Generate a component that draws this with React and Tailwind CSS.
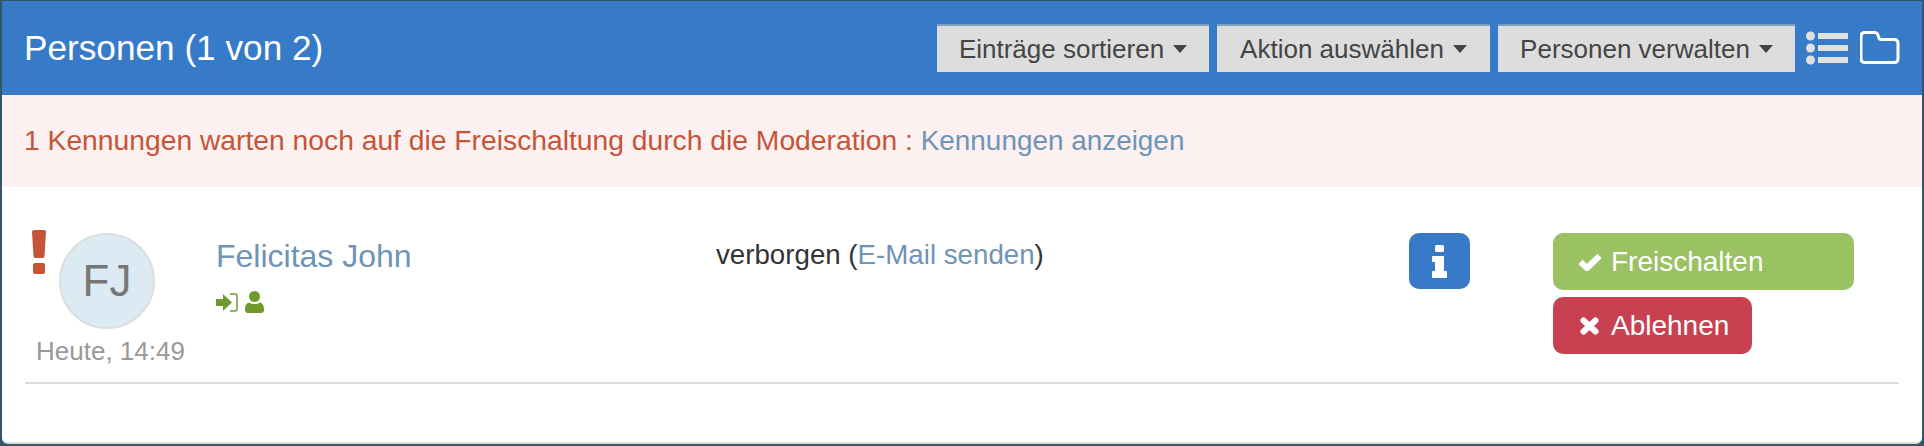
const menus = [
  ['Einträge sortieren', 'w-[272px]'],
  ['Aktion auswählen', 'w-[273px]'],
  ['Personen verwalten', 'w-[297px]'],
];

function Caret() {
  return (
    <svg width="14" height="8" viewBox="0 0 14 8" fill="#444444">
      <path d="M0 0h14L7 8z" />
    </svg>
  );
}

function ListIcon() {
  return (
    <svg width="42" height="34" viewBox="0 0 42 34" fill="#e0e0e0">
      <circle cx="4.500" cy="5" r="4.500" />
      <circle cx="4.500" cy="17" r="4.500" />
      <circle cx="4.500" cy="29" r="4.500" />
      <rect x="12" y="2" width="30" height="6" />
      <rect x="12" y="14" width="30" height="6" />
      <rect x="12" y="26" width="30" height="6" />
    </svg>
  );
}

function FolderIcon() {
  return (
    <svg width="40" height="34" viewBox="0 0 40 34" fill="none" stroke="#fff" strokeWidth="3">
      <path d="M5.500 1.500h9c2 0 3 1 3.500 2.500l1 3c.3 1 1 1.500 2 1.500h13c2.500 0 4 1.500 4 4v15c0 2.500-1.500 4-4 4h-29c-2.500 0-4-1.500-4-4v-22c0-2.500 1.500-4 3.500-4z" strokeLinejoin="round" />
    </svg>
  );
}

function AlertMark() {
  return (
    <svg width="14" height="44" viewBox="0 0 14 44" fill="#c65538">
      <path d="M2 0h10c1.500 0 2 1 2 2l-1.500 24c0 1-.7 2-2 2h-7c-1.300 0-2-1-2-2L0 2c0-1 .5-2 2-2z" />
      <rect x="1" y="33" width="12" height="11" rx="2" />
    </svg>
  );
}

function InfoGlyph() {
  return (
    <svg width="15" height="33" viewBox="0 0 15 33" fill="#fff">
      <rect x="3" y="0" width="9" height="7" rx="1.500" />
      <path d="M1 11h10c.6 0 1 .4 1 1v14h2c.6 0 1 .4 1 1v5c0 .6-.4 1-1 1H1c-.6 0-1-.4-1-1v-5c0-.6.4-1 1-1h2v-9H1c-.6 0-1-.4-1-1v-4c0-.6.4-1 1-1z" />
    </svg>
  );
}

function CheckGlyph() {
  return (
    <svg width="24" height="18" viewBox="0 0 24 18" fill="none" stroke="#fff" strokeWidth="6" strokeLinejoin="round">
      <path d="M2.500 9l6.500 6L21.500 3" />
    </svg>
  );
}

function CrossGlyph() {
  return (
    <svg width="19" height="18" viewBox="0 0 19 18" fill="none" stroke="#fff" strokeWidth="6" strokeLinecap="round">
      <path d="M3.500 3.500l12 11M15.500 3.500l-12 11" />
    </svg>
  );
}

function LoginGlyph() {
  return (
    <svg width="22" height="19" viewBox="0 0 22 19" fill="#6f9a2e">
      <path d="M0 6h7V1l9 8.500-9 8.500v-5H0z" />
      <path d="M14 1h5c1.200 0 2 .8 2 2v13c0 1.200-.8 2-2 2h-5" fill="none" stroke="#6f9a2e" strokeWidth="1.500" />
    </svg>
  );
}

function UserGlyph() {
  return (
    <svg width="19" height="22" viewBox="0 0 19 22" fill="#6f9a2e">
      <circle cx="9.500" cy="5.500" r="5.500" />
      <path d="M4 11.500c1.500 1 3.500 1.500 5.500 1.500s4-.5 5.500-1.500c2.500.5 4 3 4 6.500v1c0 2-1 3-3 3H3c-2 0-3-1-3-3v-1c0-3.500 1.500-6 4-6.500z" />
    </svg>
  );
}

export default function App() {
  return (
    <div className="h-[446px] w-[1924px] overflow-hidden bg-[#34566b] pt-px pr-[2px] pb-[2px] pl-[2px] font-['Liberation_Sans',Arial,sans-serif]">
      <div className="h-full rounded-b-md border-b-2 border-[#dddddd] bg-white">
        <header className="flex h-[94px] items-center justify-between bg-[#377ac8] pl-[22px] pr-[22px]">
          <h1 className="text-[35.2px] text-white">Personen (1 von 2)</h1>
          <div className="flex items-center">
            <div className="flex gap-2">
              {menus.map(([label, width]) => (
                <button key={label} className={`flex h-12 ${width} items-center justify-center gap-[9px] border-t-2 border-[#7f9fbf] bg-[#dddddd] text-[26px] text-[#444444]`}>
                  {label}
                  <Caret />
                </button>
              ))}
            </div>
            <div className="ml-[11px] flex items-center gap-[12px]">
              <ListIcon />
              <FolderIcon />
            </div>
          </div>
        </header>

        <div className="flex h-[92px] items-center bg-[#fcf0f0] pb-[1px] pl-[22px] text-[28.25px] text-[#c65538]">
          <span>1 Kennungen warten noch auf die Freischaltung durch die Moderation :&nbsp;</span>
          <a className="text-[27.9px] text-[#6e94b6]">Kennungen anzeigen</a>
        </div>

        <div className="mx-[23px] flex h-[197px] items-start border-b-2 border-[#dddddd] pt-[46px]">
          <div className="relative w-[191px] shrink-0">
            <div className="absolute left-[7px] top-[-3px]">
              <AlertMark />
            </div>
            <div className="ml-[34px] flex h-24 w-24 items-center justify-center rounded-full border-2 border-[#dddddd] bg-[#dcebf3] text-[44px] text-[#777777]">FJ</div>
            <div className="mt-[3px] pl-[11px] text-[26px] text-[#999999]">Heute, 14:49</div>
          </div>
          <div className="w-[500px] shrink-0">
            <a className="block text-[32px] leading-[46px] text-[#6e94b6]">Felicitas John</a>
            <div className="mt-[12px] flex items-center gap-[7px]">
              <LoginGlyph />
              <UserGlyph />
            </div>
          </div>
          <div className="w-[693px] shrink-0 pt-[2px] text-[27.7px] leading-[40px] text-[#333333]">
            verborgen (<a className="text-[#6e94b6]">E-Mail senden</a>)
          </div>
          <button className="flex h-14 w-[61px] shrink-0 items-center justify-center rounded-[10px] bg-[#377ac8]">
            <InfoGlyph />
          </button>
          <div className="ml-[83px] flex flex-col items-start gap-[7px]">
            <button className="flex h-[57px] w-[301px] items-center gap-[9px] rounded-[10px] bg-[#9ac162] pl-[25px] text-[28px] text-white">
              <CheckGlyph />
              Freischalten
            </button>
            <button className="flex h-[57px] w-[199px] items-center gap-[12px] rounded-[10px] bg-[#c84150] pl-[27px] text-[28px] text-white">
              <CrossGlyph />
              Ablehnen
            </button>
          </div>
        </div>
      </div>
    </div>
  );
}
